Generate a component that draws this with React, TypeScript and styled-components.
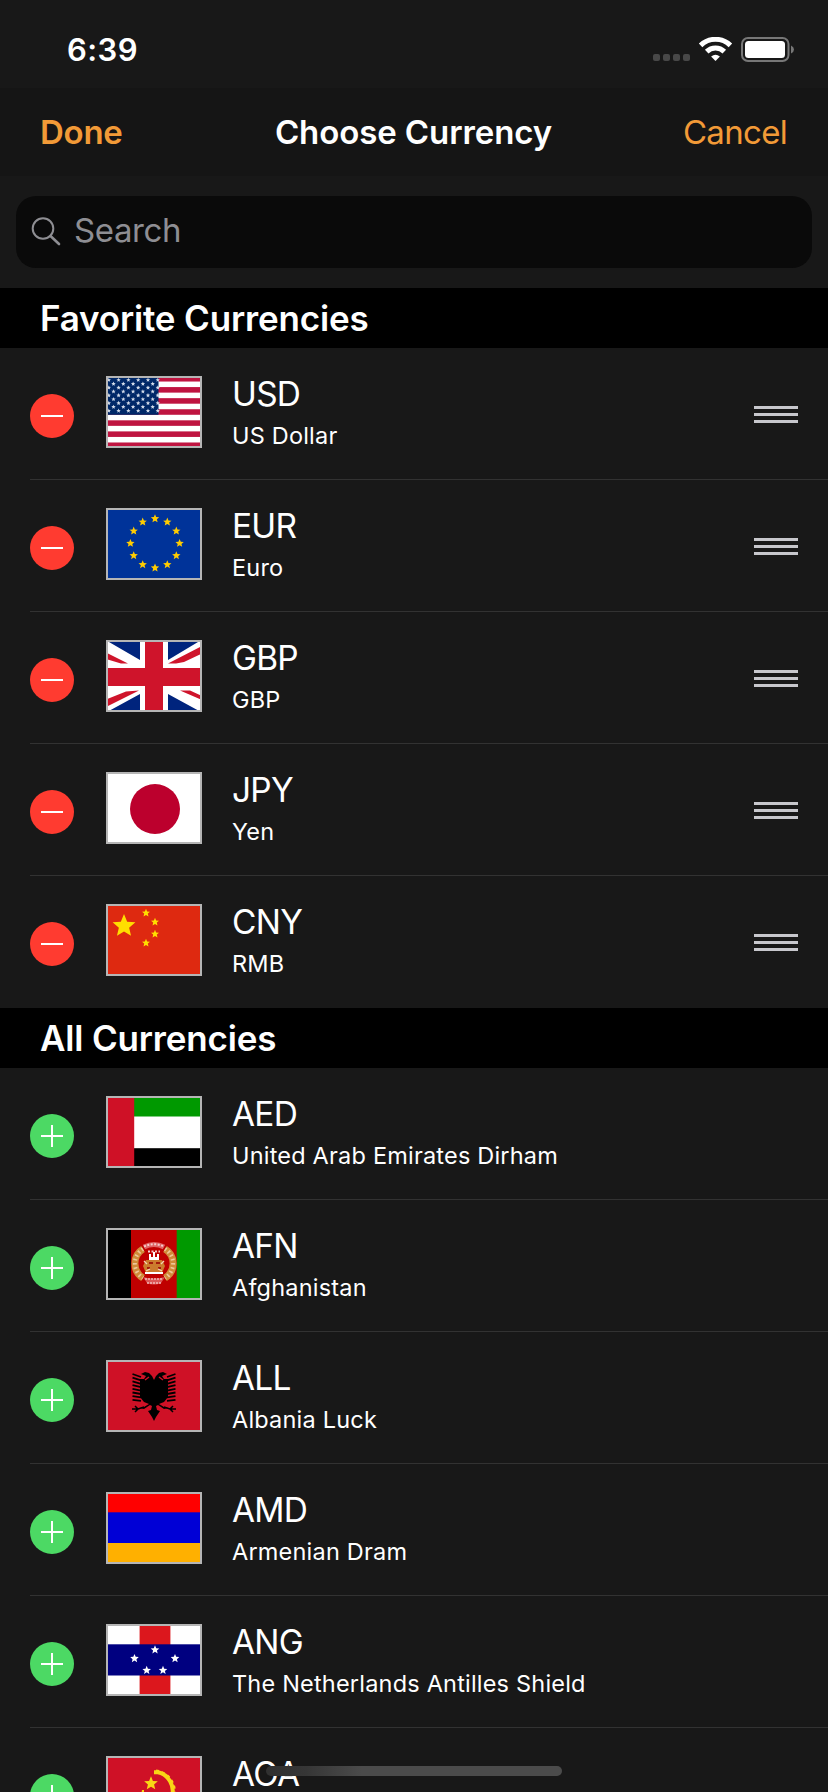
import React from "react";
import styled, { createGlobalStyle } from "styled-components";

const GlobalStyle = createGlobalStyle`
  * { box-sizing: border-box; }
  html, body { margin: 0; background: #181818; }
  body { overflow: hidden; }
`;

const Screen = styled.main`
  position: relative;
  width: 828px;
  height: 1792px;
  overflow: hidden;
  background: #181818;
  color: #fff;
  font-family: Inter, "Liberation Sans", sans-serif;
`;

const StatusBar = styled.header`
  height: 88px;
  padding: 11px 34px 0 67px;
  display: flex;
  align-items: center;
  justify-content: space-between;
`;

const Clock = styled.time`
  font-size: 31px;
  font-weight: 600;
  letter-spacing: 0.4px;
`;

const StatusIcons = styled.svg`
  display: block;
  width: 141px;
  height: 25px;
`;

const NavBar = styled.nav`
  height: 88px;
  padding: 0 41px 0 40px;
  display: grid;
  grid-template-columns: 1fr auto 1fr;
  align-items: center;
  background: #151515;
`;

const NavButton = styled.button<{ $primary?: boolean }>`
  justify-self: ${(p) => (p.$primary ? "start" : "end")};
  padding: 0;
  border: 0;
  background: none;
  color: #f29a37;
  font-family: inherit;
  font-size: 33px;
  line-height: 40px;
  font-weight: ${(p) => (p.$primary ? 600 : 400)};
  letter-spacing: ${(p) => (p.$primary ? "-0.25px" : "-0.7px")};
`;

const Title = styled.h1`
  margin: 0;
  font-size: 33px;
  line-height: 40px;
  font-weight: 600;
  letter-spacing: -0.1px;
`;

const SearchArea = styled.div`
  height: 112px;
  padding: 20px 16px;
`;

const SearchField = styled.label`
  height: 72px;
  padding: 0 0 0 15px;
  display: flex;
  align-items: center;
  gap: 13px;
  border-radius: 20px;
  background: #0a0a0a;
  color: #8e8e93;
  font-size: 33px;
  line-height: 40px;
  letter-spacing: -0.4px;
`;

const SearchIcon = styled.svg`
  width: 30px;
  height: 30px;
  margin-bottom: 3px;
`;

const Placeholder = styled.span`
  padding-bottom: 4px;
`;

const SectionHeader = styled.h2`
  margin: 0;
  height: 60px;
  padding-left: 40px;
  background: #000;
  font-size: 35px;
  line-height: 60px;
  font-weight: 600;
  letter-spacing: -0.17px;
`;

const List = styled.ul`
  margin: 0;
  padding: 0 0 0 30px;
  list-style: none;
`;

const Row = styled.li`
  height: 132px;
  display: flex;
  align-items: flex-start;
  padding: 26px 30px 0 0;
  border-bottom: 1px solid #323232;
  &:last-child { border-bottom-color: transparent; }
`;

const ToggleButton = styled.button<{ $remove?: boolean }>`
  width: 44px;
  height: 44px;
  margin: 20px 32px 0 0;
  padding: 0;
  border: 0;
  border-radius: 50%;
  display: grid;
  place-items: center;
  background: ${(p) => (p.$remove ? "#ff3b30" : "#4cd964")};
`;

const Sign = styled.svg`
  display: block;
  width: 22px;
  height: 22px;
`;

const FlagFrame = styled.svg`
  display: block;
  width: 96px;
  height: 72px;
  margin: 2px 30px 0 0;
`;

const Labels = styled.div`
  flex: 1;
  display: flex;
  flex-direction: column;
  gap: 5.5px;
`;

const Code = styled.span`
  font-size: 33.4px;
  line-height: 40px;
  letter-spacing: -0.7px;
`;

const Name = styled.span`
  font-size: 23.5px;
  line-height: 32px;
  letter-spacing: 0.2px;
`;

const DragHandle = styled.span`
  width: 44px;
  height: 17px;
  margin-top: 32px;
  display: flex;
  flex-direction: column;
  justify-content: space-between;
`;

const HandleLine = styled.i`
  height: 3px;
  background: #c7c7cc;
`;

const HomeIndicator = styled.div`
  position: absolute;
  left: 266px;
  bottom: 16px;
  width: 296px;
  height: 10px;
  border-radius: 5px;
  background: linear-gradient(90deg, #303030 0, #363636 40px, #454545 80px, #4b4b4b 96px);
`;

function starPoints(cx: number, cy: number, r: number) {
  return Array.from({ length: 10 }, (_, i) => {
    const a = (Math.PI / 5) * i - Math.PI / 2;
    const q = i % 2 ? r * 0.45 : r;
    return `${(cx + q * Math.cos(a)).toFixed(2)},${(cy + q * Math.sin(a)).toFixed(2)}`;
  }).join(" ");
}

const Star = ({ x, y, r }: { x: number; y: number; r: number }) => (
  <polygon points={starPoints(x, y, r)} />
);

const circleAt = (n: number, cx: number, cy: number, r: number) =>
  Array.from({ length: n }, (_, i) => {
    const a = (2 * Math.PI * i) / n - Math.PI / 2;
    return [cx + r * Math.cos(a), cy + r * Math.sin(a)];
  });

const flags: Record<string, React.ReactNode> = {
  USD: (
    <>
      <rect width="96" height="72" fill="#fff" />
      {[0, 1, 2, 3, 4, 5, 6].map((i) => (
        <rect key={i} y={i * 11.08} width="96" height="5.54" fill="#bf1440" />
      ))}
      <rect width="52.5" height="38.8" fill="#002868" />
      <g fill="#d3dcea">
        {Array.from({ length: 9 }, (_, r) =>
          Array.from({ length: r % 2 ? 5 : 6 }, (_, c) => (
            <Star key={`${r}-${c}`} x={(r % 2 ? 7.5 : 2.8) + c * 9.8} y={4 + r * 3.85} r={2.3} />
          ))
        )}
      </g>
    </>
  ),
  EUR: (
    <>
      <rect width="96" height="72" fill="#039" />
      <g fill="#fc0">
        {circleAt(12, 49, 35.3, 24.6).map(([x, y], i) => (
          <Star key={i} x={x} y={y} r={4.4} />
        ))}
      </g>
    </>
  ),
  GBP: (
    <>
      <rect width="96" height="72" fill="#fff" />
      <path fill="#00247d" d="M3 2H34V20ZM62 2H92L62 20ZM34 54V72H1ZM62 54V72H95Z" />
      <path
        fill="#cf142b"
        d="M0 12.5 22 23.5H15L0 19ZM96 6V13.5L78 22 70 23.5H62ZM0 59.5 20 51.5 33 50.5 0 67ZM74 50.5H84L96 56V60Z"
      />
      <path fill="#cf142b" d="M39 0H57V28H96V46H57V72H39V46H0V28H39Z" />
    </>
  ),
  JPY: (
    <>
      <rect width="96" height="72" fill="#fff" />
      <circle cx="49" cy="37" r="25" fill="#bc002d" />
    </>
  ),
  CNY: (
    <>
      <rect width="96" height="72" fill="#de2910" />
      <g fill="#ffde00">
        <Star x={18} y={22} r={12} />
        <Star x={40} y={9} r={4.2} />
        <Star x={49} y={18} r={4.2} />
        <Star x={49} y={30} r={4.2} />
        <Star x={40} y={39} r={4.2} />
      </g>
    </>
  ),
  AED: (
    <>
      <rect width="96" height="72" fill="#fff" />
      <rect width="96" height="20.5" fill="#090" />
      <rect y="52.2" width="96" height="20" fill="#000" />
      <rect width="28.2" height="72" fill="#cf1126" />
    </>
  ),
  AFN: (
    <>
      <rect width="96" height="72" fill="#bf0000" />
      <rect width="25" height="72" fill="#000" />
      <rect x="70.7" width="26" height="72" fill="#090" />
      <g fill="none">
        <path d="M37 21A17 17 0 0 0 37 50M59 21A17 17 0 0 1 59 50" stroke="#d08a38" strokeWidth="7" />
        <path d="M37 21A17 17 0 0 0 37 50M59 21A17 17 0 0 1 59 50" stroke="#eec79a" strokeWidth="4" strokeDasharray="1.6 2.6" />
        <path d="M38 19Q48 14 58 19" stroke="#e06666" strokeWidth="5" />
        <path d="M38 18.5Q48 14 58 18.5M42 23.5H54" stroke="#f5cccc" strokeWidth="2" strokeDasharray="2 1.5" />
      </g>
      <path d="M37 49Q48 52 59 49L55 55Q48 58 41 55Z" fill="#dc5757" />
      <path d="M39 51H57M41 55H55" stroke="#f1baba" strokeWidth="1.5" strokeDasharray="2 1" />
      <path fill="#cc7b2d" d="M40 32H56L59 38 56 45H40L37 38Z" />
      <path fill="#fff" d="M43 32V26H45V29H47V24H49V29H51V26H53V32ZM39 44H57V46H39Z" />
      <path stroke="#a41a0a" strokeWidth="1.8" d="M43 35H47M50 35H54M41 40H44M52 40H55" />
      <path stroke="#f2d5b2" strokeWidth="1.3" d="M38 33 41 36M58 33 55 36M40 43 44 41M56 43 52 41" />
    </>
  ),
  ALL: (
    <>
      <rect width="96" height="72" fill="#cf1126" />
      <path d="M48 20 46 16 43 13 39 12 35 14 40 16 38 19 34 19V37L38 42 43 44 38 47 34 48 38 49 44 45 46 46 45 50 42 51 46 57 48 61 50 57 54 51 51 50 50 46 52 45 58 49 62 48 58 47 53 44 58 42 62 37V19L58 19 56 16 61 14 57 12 53 13 50 16Z" />
      <g stroke="#000" strokeWidth="1.8" fill="none">
        {[0, 1, 2, 3, 4, 5, 6, 7].map((i) => (
          <path key={i} d={`M26.5 ${14 + i * 3.7}L35 ${17 + i * 3.4}M69.5 ${14 + i * 3.7}L61 ${17 + i * 3.4}`} />
        ))}
        <path d="M26 49H32L38 47M29 46 32 49 29 52M70 49H64L58 47M67 46 64 49 67 52" strokeWidth="1.5" />
      </g>
      <path d="M39 20 43 17M57 20 53 17" stroke="#cf1126" strokeWidth="1.4" />
    </>
  ),
  AMD: (
    <>
      <rect width="96" height="72" fill="#0000d6" />
      <rect width="96" height="20.3" fill="#f00" />
      <rect y="51" width="96" height="21" fill="#ffb000" />
    </>
  ),
  ANG: (
    <>
      <rect width="96" height="72" fill="#fff" />
      <rect x="33.6" width="30.8" height="72" fill="#dc171d" />
      <rect y="20.3" width="96" height="31.2" fill="#000080" />
      <g fill="#fff">
        <Star x={49} y={25.8} r={4.5} />
        <Star x={28.5} y={34.5} r={4.5} />
        <Star x={69} y={34.5} r={4.5} />
        <Star x={40.7} y={46.3} r={4.5} />
        <Star x={57} y={46.3} r={4.5} />
      </g>
    </>
  ),
  AOA: (
    <>
      <rect width="96" height="72" fill="#cf1126" />
      <g fill="#f9d616">
        <Star x={45} y={27.5} r={7.2} />
        <path d="M36 34H38V40H35Z" />
      </g>
      <path d="M48 16.3H52A19 19 0 0 1 66 40" fill="none" stroke="#f9d616" strokeWidth="4" />
      <path d="M50 15A21 21 0 0 1 68 40" fill="none" stroke="#f9d616" strokeWidth="3" strokeDasharray="3 3" />
    </>
  ),
};

const Flag = ({ code }: { code: string }) => (
  <FlagFrame viewBox="0 0 96 72" role="img" aria-label={code}>
    {flags[code]}
    <rect x="1" y="1" width="94" height="70" fill="none" stroke="#b5b5b5" strokeWidth="2" />
  </FlagFrame>
);

type Currency = { code: string; name: string };

const favorites: Currency[] = [
  { code: "USD", name: "US Dollar" },
  { code: "EUR", name: "Euro" },
  { code: "GBP", name: "GBP" },
  { code: "JPY", name: "Yen" },
  { code: "CNY", name: "RMB" },
];

const others: Currency[] = [
  { code: "AED", name: "United Arab Emirates Dirham" },
  { code: "AFN", name: "Afghanistan" },
  { code: "ALL", name: "Albania Luck" },
  { code: "AMD", name: "Armenian Dram" },
  { code: "ANG", name: "The Netherlands Antilles Shield" },
  { code: "AOA", name: "" },
];

const CurrencyRow = ({ code, name, favorite }: Currency & { favorite?: boolean }) => (
  <Row>
    <ToggleButton $remove={favorite}>
      <Sign viewBox="0 0 22 22" stroke="#fff" strokeWidth="2">
        <path d={favorite ? "M0 11H22" : "M0 11H22M11 0V22"} />
      </Sign>
    </ToggleButton>
    <Flag code={code} />
    <Labels>
      <Code>{code}</Code>
      {name && <Name>{name}</Name>}
    </Labels>
    {favorite && (
      <DragHandle>
        <HandleLine />
        <HandleLine />
        <HandleLine />
      </DragHandle>
    )}
  </Row>
);

export default function App() {
  return (
    <Screen>
      <GlobalStyle />
      <StatusBar>
        <Clock>6:39</Clock>
        <StatusIcons viewBox="0 0 141 25">
          {[0, 10, 20, 30].map((x) => (
            <rect key={x} x={x} y="17" width="7" height="7" rx="2" fill="#484848" />
          ))}
          <g fill="none" stroke="#fff" strokeWidth="5">
            <path d="M47.6 8.4A21.2 21.2 0 0 1 77.4 8.4" />
            <path d="M53.7 14.6A12.5 12.5 0 0 1 71.3 14.6" />
          </g>
          <path fill="#fff" d="M58.1 19.6Q62.5 15.7 66.9 19.6L62.5 24Z" />
          <rect x="89" y="1" width="46.5" height="23" rx="6" fill="none" stroke="#777" strokeWidth="2" />
          <rect x="92" y="4" width="40" height="17" rx="3.5" fill="#fff" />
          <path d="M138 8.5Q141 10 141 12.5T138 16.5Z" fill="#777" />
        </StatusIcons>
      </StatusBar>
      <NavBar>
        <NavButton $primary>Done</NavButton>
        <Title>Choose Currency</Title>
        <NavButton>Cancel</NavButton>
      </NavBar>
      <SearchArea>
        <SearchField>
          <SearchIcon viewBox="0 0 30 30" fill="none" stroke="#8e8e93" strokeWidth="2">
            <circle cx="12" cy="12.5" r="10.3" />
            <path d="M19.5 20 28 28" strokeWidth="2.6" strokeLinecap="round" />
          </SearchIcon>
          <Placeholder>Search</Placeholder>
        </SearchField>
      </SearchArea>
      <SectionHeader>Favorite Currencies</SectionHeader>
      <List>
        {favorites.map((c) => (
          <CurrencyRow key={c.code} {...c} favorite />
        ))}
      </List>
      <SectionHeader>All Currencies</SectionHeader>
      <List>
        {others.map((c) => (
          <CurrencyRow key={c.code} {...c} />
        ))}
      </List>
      <HomeIndicator />
    </Screen>
  );
}
